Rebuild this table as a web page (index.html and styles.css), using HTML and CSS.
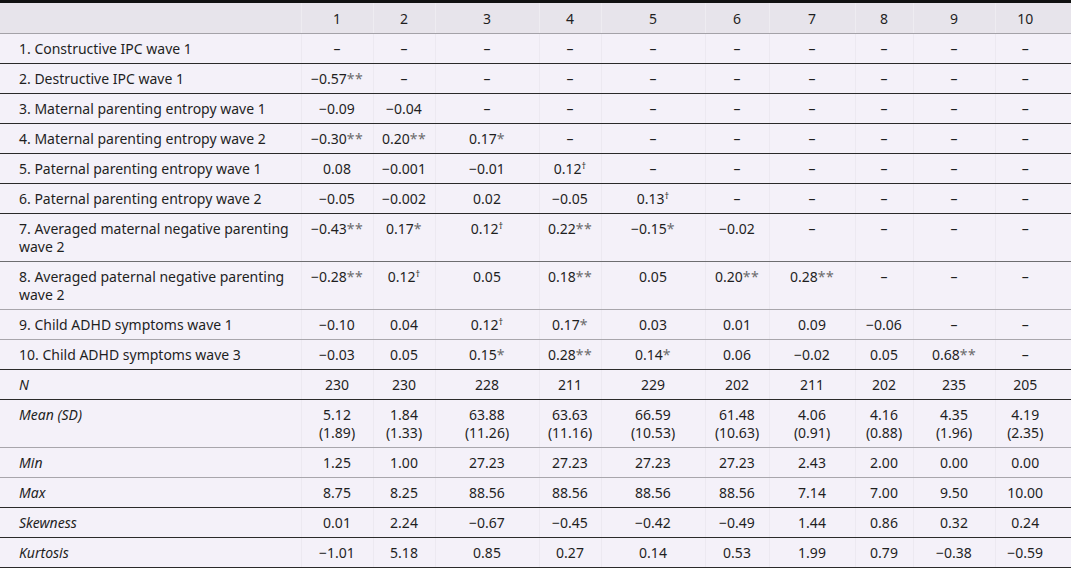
FILE: index.html
```html
<!DOCTYPE html>
<html lang="en">
<head>
<meta charset="utf-8">
<title>Correlations table</title>
<link rel="stylesheet" href="styles.css">
</head>
<body>
<table class="tbl">
  <colgroup>
    <col class="c-label">
    <col class="c1"><col class="c2"><col class="c3"><col class="c4"><col class="c5">
    <col class="c6"><col class="c7"><col class="c8"><col class="c9"><col class="c10">
  </colgroup>
  <thead>
    <tr class="head">
      <th class="lbl"></th>
      <th>1</th><th>2</th><th>3</th><th>4</th><th>5</th><th>6</th><th>7</th><th>8</th><th>9</th><th class="last">10</th>
    </tr>
  </thead>
  <tbody>
    <tr class="dark">
      <td class="lbl">1. Constructive IPC wave 1</td>
      <td>–</td><td>–</td><td>–</td><td>–</td><td>–</td><td>–</td><td>–</td><td>–</td><td>–</td><td class="last">–</td>
    </tr>
    <tr class="dark">
      <td class="lbl">2. Destructive IPC wave 1</td>
      <td>−0.57<span class="s">**</span></td><td>–</td><td>–</td><td>–</td><td>–</td><td>–</td><td>–</td><td>–</td><td>–</td><td class="last">–</td>
    </tr>
    <tr class="dark">
      <td class="lbl">3. Maternal parenting entropy wave 1</td>
      <td>−0.09</td><td>−0.04</td><td>–</td><td>–</td><td>–</td><td>–</td><td>–</td><td>–</td><td>–</td><td class="last">–</td>
    </tr>
    <tr class="dark">
      <td class="lbl">4. Maternal parenting entropy wave 2</td>
      <td>−0.30<span class="s">**</span></td><td>0.20<span class="s">**</span></td><td>0.17<span class="s">*</span></td><td>–</td><td>–</td><td>–</td><td>–</td><td>–</td><td>–</td><td class="last">–</td>
    </tr>
    <tr class="dark">
      <td class="lbl">5. Paternal parenting entropy wave 1</td>
      <td>0.08</td><td>−0.001</td><td>−0.01</td><td>0.12<sup>†</sup></td><td>–</td><td>–</td><td>–</td><td>–</td><td>–</td><td class="last">–</td>
    </tr>
    <tr class="dark">
      <td class="lbl">6. Paternal parenting entropy wave 2</td>
      <td>−0.05</td><td>−0.002</td><td>0.02</td><td>−0.05</td><td>0.13<sup>†</sup></td><td>–</td><td>–</td><td>–</td><td>–</td><td class="last">–</td>
    </tr>
    <tr class="mid">
      <td class="lbl">7. Averaged maternal negative parenting wave 2</td>
      <td>−0.43<span class="s">**</span></td><td>0.17<span class="s">*</span></td><td>0.12<sup>†</sup></td><td>0.22<span class="s">**</span></td><td>−0.15<span class="s">*</span></td><td>−0.02</td><td>–</td><td>–</td><td>–</td><td class="last">–</td>
    </tr>
    <tr class="light">
      <td class="lbl">8. Averaged paternal negative parenting wave 2</td>
      <td>−0.28<span class="s">**</span></td><td>0.12<sup>†</sup></td><td>0.05</td><td>0.18<span class="s">**</span></td><td>0.05</td><td>0.20<span class="s">**</span></td><td>0.28<span class="s">**</span></td><td>–</td><td>–</td><td class="last">–</td>
    </tr>
    <tr class="light">
      <td class="lbl">9. Child ADHD symptoms wave 1</td>
      <td>−0.10</td><td>0.04</td><td>0.12<sup>†</sup></td><td>0.17<span class="s">*</span></td><td>0.03</td><td>0.01</td><td>0.09</td><td>−0.06</td><td>–</td><td class="last">–</td>
    </tr>
    <tr class="dark">
      <td class="lbl">10. Child ADHD symptoms wave 3</td>
      <td>−0.03</td><td>0.05</td><td>0.15<span class="s">*</span></td><td>0.28<span class="s">**</span></td><td>0.14<span class="s">*</span></td><td>0.06</td><td>−0.02</td><td>0.05</td><td>0.68<span class="s">**</span></td><td class="last">–</td>
    </tr>
    <tr class="dark">
      <td class="lbl"><em>N</em></td>
      <td>230</td><td>230</td><td>228</td><td>211</td><td>229</td><td>202</td><td>211</td><td>202</td><td>235</td><td class="last">205</td>
    </tr>
    <tr class="light">
      <td class="lbl"><em>Mean (SD)</em></td>
      <td>5.12<br>(1.89)</td><td>1.84<br>(1.33)</td><td>63.88<br>(11.26)</td><td>63.63<br>(11.16)</td><td>66.59<br>(10.53)</td><td>61.48<br>(10.63)</td><td>4.06<br>(0.91)</td><td>4.16<br>(0.88)</td><td>4.35<br>(1.96)</td><td class="last">4.19<br>(2.35)</td>
    </tr>
    <tr class="light">
      <td class="lbl"><em>Min</em></td>
      <td>1.25</td><td>1.00</td><td>27.23</td><td>27.23</td><td>27.23</td><td>27.23</td><td>2.43</td><td>2.00</td><td>0.00</td><td class="last">0.00</td>
    </tr>
    <tr class="dark">
      <td class="lbl"><em>Max</em></td>
      <td>8.75</td><td>8.25</td><td>88.56</td><td>88.56</td><td>88.56</td><td>88.56</td><td>7.14</td><td>7.00</td><td>9.50</td><td class="last">10.00</td>
    </tr>
    <tr class="dark">
      <td class="lbl"><em>Skewness</em></td>
      <td>0.01</td><td>2.24</td><td>−0.67</td><td>−0.45</td><td>−0.42</td><td>−0.49</td><td>1.44</td><td>0.86</td><td>0.32</td><td class="last">0.24</td>
    </tr>
    <tr class="dark">
      <td class="lbl"><em>Kurtosis</em></td>
      <td>−1.01</td><td>5.18</td><td>0.85</td><td>0.27</td><td>0.14</td><td>0.53</td><td>1.99</td><td>0.79</td><td>−0.38</td><td class="last">−0.59</td>
    </tr>
  </tbody>
</table>
</body>
</html>
```

FILE: styles.css
```css
html, body {
  margin: 0;
  padding: 0;
  background: #ffffff;
}

body {
  font-family: "Noto Sans", "Open Sans", "DejaVu Sans", sans-serif;
  font-size: 14px;
  color: #1f1f1f;
}

.tbl {
  width: 1071px;
  border-collapse: collapse;
  table-layout: fixed;
  background: #f4f1f9;
  border-top: 3px solid #111111;
}

.c-label { width: 301px; }
.c1 { width: 72px; }
.c2 { width: 62px; }
.c3 { width: 104px; }
.c4 { width: 62px; }
.c5 { width: 104px; }
.c6 { width: 64px; }
.c7 { width: 86px; }
.c8 { width: 58px; }
.c9 { width: 82px; }
.c10 { width: 76px; }

.tbl th,
.tbl td {
  line-height: 18px;
  padding: 6px 4px 5px;
  text-align: center;
  vertical-align: top;
  font-weight: normal;
  white-space: nowrap;
  border-left: 1px solid #ece9f1;
}

.tbl .lbl {
  text-align: left;
  padding-left: 19px;
  padding-right: 6px;
  white-space: normal;
  border-left: none;
}

.tbl .last {
  padding-right: 20px;
}

.head th {
  background: #e7e4eb;
  border-left-color: #eeecf1;
  padding-top: 7px;
  padding-bottom: 5px;
  border-bottom: 1px solid #a4a2a8;
}

tr.dark td { border-bottom: 1px solid #2a2a2a; }
tr.mid td { border-bottom: 1px solid #6d6d70; }
tr.light td { border-bottom: 1px solid #a8a6ac; }

.s {
  color: #6b6b6b;
  letter-spacing: 0.5px;
}

sup {
  font-size: 9px;
  line-height: 0;
  vertical-align: 5px;
}

em {
  font-style: italic;
}
```
